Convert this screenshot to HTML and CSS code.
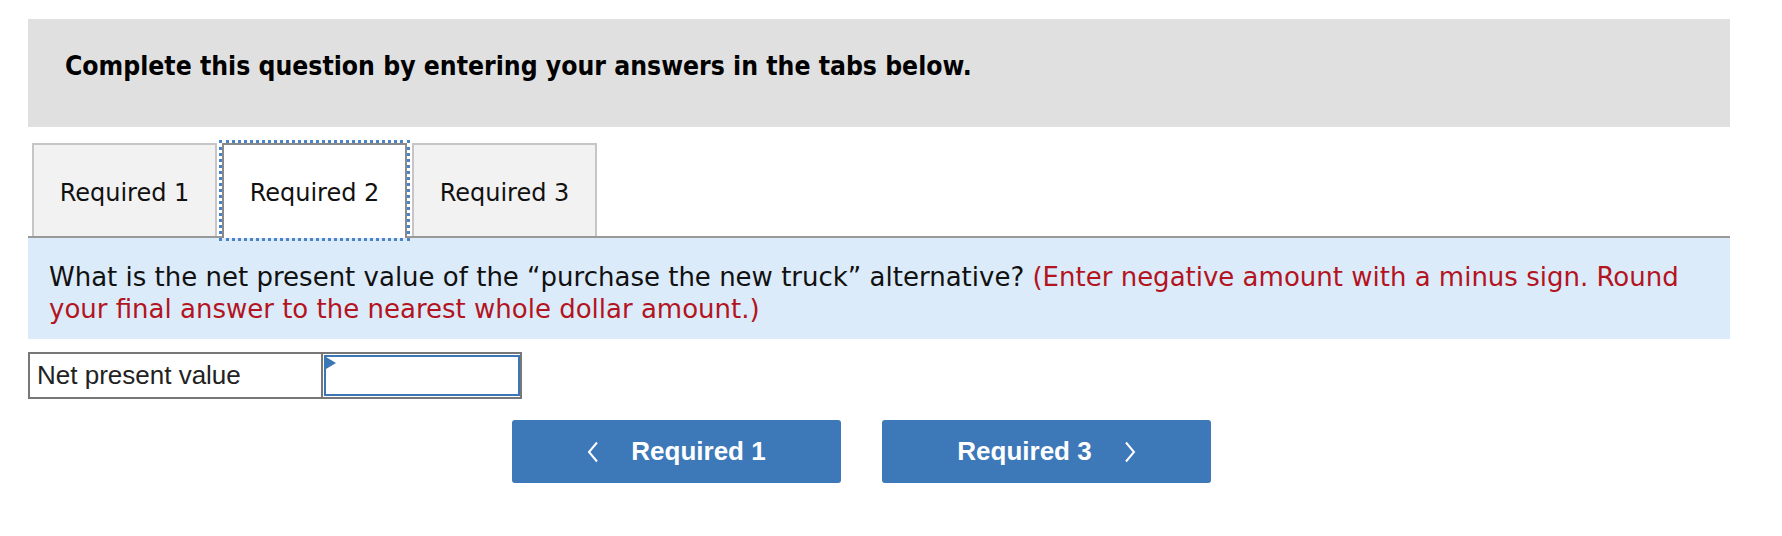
FILE: index.html
```html
<!DOCTYPE html>
<html>
<head>
<meta charset="utf-8">
<link rel="stylesheet" href="styles.css">
</head>
<body>
<div class="page">
  <div class="banner">
    <h1 class="banner-title">Complete this question by entering your answers in the tabs below.</h1>
  </div>

  <div class="tabs">
    <div class="tab">Required 1</div>
    <div class="tab tab-active">Required 2</div>
    <div class="tab">Required 3</div>
  </div>

  <div class="prompt">
    <p class="prompt-text">What is the net present value of the “purchase the new truck” alternative? <span class="prompt-note">(Enter negative amount with a minus sign. Round your final answer to the nearest whole dollar amount.)</span></p>
  </div>

  <div class="answer-table">
    <div class="answer-label">Net present value</div>
    <div class="answer-cell">
      <div class="answer-input"><span class="answer-flag"></span></div>
    </div>
  </div>

  <div class="nav">
    <div class="nav-btn">
      <svg class="chev" width="12" height="22" viewBox="0 0 12 22"><path d="M10 1.5 L2 11 L10 20.5" fill="none" stroke="#fff" stroke-width="2"/></svg>
      <span class="nav-label">Required 1</span>
    </div>
    <div class="nav-btn">
      <span class="nav-label">Required 3</span>
      <svg class="chev" width="12" height="22" viewBox="0 0 12 22"><path d="M2 1.5 L10 11 L2 20.5" fill="none" stroke="#fff" stroke-width="2"/></svg>
    </div>
  </div>
</div>
</body>
</html>
```

FILE: styles.css
```css
html, body {
  margin: 0;
  padding: 0;
  background: #fff;
}

.page {
  width: 1702px;
  margin-left: 28px;
  padding-top: 19px;
}

.banner {
  background: #e0e0e0;
  height: 108px;
  box-sizing: border-box;
  padding: 32px 0 0 37px;
}

.banner-title {
  margin: 0;
  font-family: "DejaVu Sans Condensed", "DejaVu Sans", sans-serif;
  font-weight: bold;
  font-size: 26.3px;
  line-height: 30px;
  color: #000;
}

.tabs {
  display: flex;
  margin-top: 16px;
  padding-left: 4px;
  border-bottom: 2px solid #999;
  height: 93px;
}

.tab {
  width: 185px;
  height: 93px;
  box-sizing: border-box;
  margin-right: 5px;
  background: #f2f2f2;
  border: 2px solid #c6c6c6;
  border-bottom: none;
  display: flex;
  align-items: center;
  justify-content: center;
  padding-top: 4px;
  font-family: "DejaVu Sans", Verdana, sans-serif;
  font-size: 24px;
  color: #111;
}

.tab-active {
  background: #fff;
  border-color: #8a8a8a;
  height: 95px;
  padding-bottom: 2px;
  outline: 3px dotted #4a84c4;
  position: relative;
  z-index: 1;
}

.prompt {
  background: #dbebf9;
  height: 101px;
  box-sizing: border-box;
  padding: 23px 21px 0 21px;
}

.prompt-text {
  margin: 0;
  font-family: "DejaVu Sans", Verdana, sans-serif;
  font-size: 26px;
  line-height: 32px;
  color: #111;
}

.prompt-note {
  color: #b3141f;
}

.answer-table {
  display: flex;
  width: 494px;
  height: 47px;
  box-sizing: border-box;
  margin-top: 13px;
  border: 2px solid #777;
}

.answer-label {
  width: 293px;
  box-sizing: border-box;
  border-right: 2px solid #777;
  padding-left: 7px;
  display: flex;
  align-items: center;
  font-family: "Liberation Sans", Arial, sans-serif;
  font-size: 26px;
  color: #222;
}

.answer-cell {
  flex: 1;
  padding: 1px 0 1px 1px;
  display: flex;
}

.answer-input {
  flex: 1;
  border: 2px solid #3b76b5;
  position: relative;
}

.answer-flag {
  position: absolute;
  left: 0;
  top: 0;
  width: 0;
  height: 0;
  border-top: 6px solid transparent;
  border-bottom: 6px solid transparent;
  border-left: 10px solid #3b76b5;
}

.nav {
  display: flex;
  justify-content: center;
  gap: 41px;
  margin-top: 21px;
  padding-right: 35px;
}

.nav-btn {
  width: 329px;
  height: 63px;
  border-radius: 3px;
  background: #3d78b8;
  display: flex;
  align-items: center;
  justify-content: center;
  gap: 32px;
  color: #fff;
  font-family: "Liberation Sans", Arial, sans-serif;
  font-weight: bold;
  font-size: 26px;
}

.chev {
  display: block;
}
```
